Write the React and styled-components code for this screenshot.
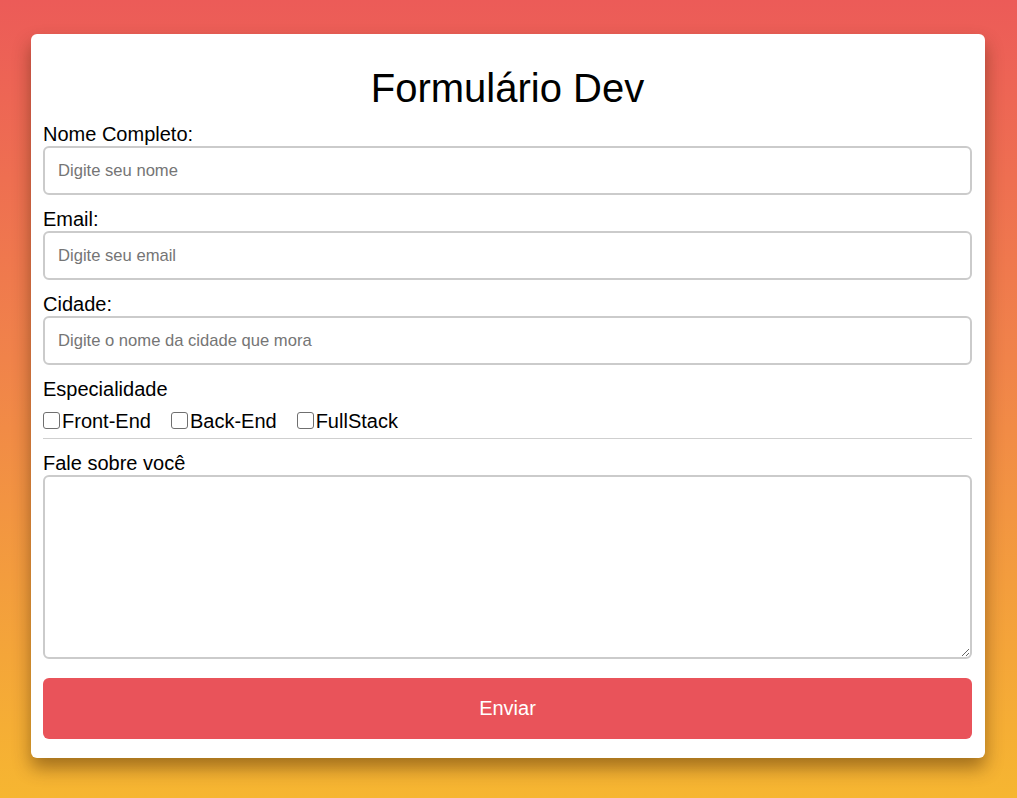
import React from 'react'
import styled, { createGlobalStyle } from 'styled-components'

const GlobalStyle = createGlobalStyle`
	* {
		box-sizing: border-box;
	}
	body {
		margin: 0;
		min-height: 100vh;
		font-family: 'Liberation Sans', Arial, sans-serif;
		background: linear-gradient(180deg, #ec5b58 0%, #f0834a 45%, #f6b631 100%);
	}
`

const Page = styled.main`
	display: flex;
	align-items: flex-start;
	padding: 34px 0 0 31px;
	min-height: 100vh;
`

const Card = styled.form`
	width: 954px;
	background: #fff;
	border-radius: 6px;
	padding: 12px 13px 19px 12px;
	box-shadow: 0 10px 18px rgba(60, 30, 0, 0.45);
	display: flex;
	flex-direction: column;
`

const Title = styled.h1`
	margin: 19px 0 11px;
	font-size: 40px;
	line-height: 46px;
	font-weight: 400;
	text-align: center;
	color: #000;
`

const Label = styled.label`
	display: block;
	font-size: 20px;
	line-height: 24px;
	color: #000;
`

const Input = styled.input`
	display: block;
	width: 100%;
	height: 49px;
	margin: 0 0 12px;
	padding: 0 13px;
	border: 2px solid #cbcbcb;
	border-radius: 6px;
	font-family: inherit;
	font-size: 16.6px;
	outline: none;

	&::placeholder {
		color: #757575;
	}
`

const CheckRow = styled.div`
	display: flex;
	gap: 20px;
	margin-top: 8px;
	line-height: 24px;
`

const CheckItem = styled.label`
	display: inline-flex;
	align-items: center;
	font-size: 20px;
	color: #000;
`

const Check = styled.input`
	appearance: none;
	width: 17px;
	height: 17px;
	margin: 0 2px 2px 0;
	border: 1px solid #6f6f6f;
	border-radius: 3px;
	background: #fff;
`

const Divider = styled.hr`
	width: 100%;
	margin: 5px 0 12px;
	border: 0;
	border-top: 1px solid #cfcfcf;
`

const TextArea = styled.textarea`
	display: block;
	width: 100%;
	height: 184px;
	margin: 0;
	padding: 12px;
	border: 2px solid #cbcbcb;
	border-radius: 6px;
	font-family: inherit;
	font-size: 16.6px;
	outline: none;
`

const Submit = styled.button`
	height: 61px;
	margin-top: 19px;
	border: 0;
	border-radius: 6px;
	background: #e9535a;
	color: #fff;
	font-family: inherit;
	font-size: 20px;
	cursor: pointer;
`

const fields = [
	{ id: 'nome', label: 'Nome Completo:', placeholder: 'Digite seu nome' },
	{ id: 'email', label: 'Email:', placeholder: 'Digite seu email' },
	{ id: 'cidade', label: 'Cidade:', placeholder: 'Digite o nome da cidade que mora' },
]

const especialidades = ['Front-End', 'Back-End', 'FullStack']

const App = () => {
	return (
		<>
			<GlobalStyle />
			<Page>
				<Card onSubmit={(e) => e.preventDefault()}>
					<Title>Formulário Dev</Title>
					{fields.map((field) => (
						<div key={field.id}>
							<Label htmlFor={field.id}>{field.label}</Label>
							<Input id={field.id} type="text" placeholder={field.placeholder} />
						</div>
					))}
					<Label as="span">Especialidade</Label>
					<CheckRow>
						{especialidades.map((item) => (
							<CheckItem key={item}>
								<Check type="checkbox" />
								{item}
							</CheckItem>
						))}
					</CheckRow>
					<Divider />
					<Label htmlFor="sobre">Fale sobre você</Label>
					<TextArea id="sobre" />
					<Submit type="submit">Enviar</Submit>
				</Card>
			</Page>
		</>
	)
}

export default App
